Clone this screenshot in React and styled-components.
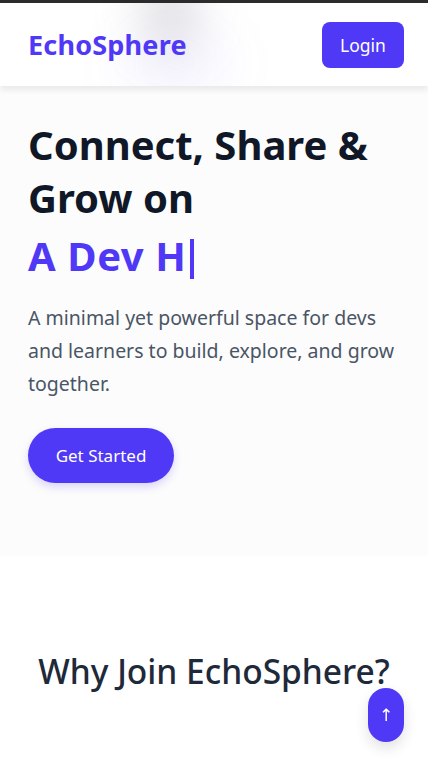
import React from "react";
import styled, { createGlobalStyle } from "styled-components";

const Global = createGlobalStyle`
  html, body { margin: 0; padding: 0; background: #ffffff; }
  body { font-family: "Noto Sans", "Open Sans", sans-serif; overflow: hidden; }
  * { box-sizing: border-box; }
`;

const Page = styled.div`
  min-height: 764px;
  border-top: 3px solid #2b2b2b;
  position: relative;
  overflow: hidden;
`;

const Header = styled.header`
  position: relative;
  z-index: 2;
  height: 83px;
  background: #ffffff;
  display: flex;
  align-items: center;
  justify-content: space-between;
  padding: 0 24px 0 28px;
  box-shadow: 0 4px 6px rgba(0, 0, 0, 0.08);
  overflow: hidden;
`;

const Blob = styled.div`
  position: absolute;
  border-radius: 50%;
  filter: blur(${(p) => p.$blur}px);
  background: ${(p) => p.$color};
  width: ${(p) => p.$w}px;
  height: ${(p) => p.$h}px;
  left: ${(p) => p.$x}px;
  top: ${(p) => p.$y}px;
  pointer-events: none;
`;

const Logo = styled.div`
  position: relative;
  font-size: 27px;
  font-weight: 700;
  color: #4f39f6;
  letter-spacing: 0.2px;
`;

const LoginButton = styled.button`
  position: relative;
  width: 82px;
  height: 46px;
  border: none;
  border-radius: 8px;
  background: #4f39f6;
  color: #ffffff;
  font-family: inherit;
  font-size: 17.5px;
`;

const Hero = styled.section`
  background: #fcfcfc;
  padding: 32px 28px 73px;
  display: flex;
  flex-direction: column;
  align-items: flex-start;
`;

const Title = styled.h1`
  margin: 0;
  font-size: 40px;
  line-height: 53px;
  font-weight: 700;
  color: #101828;
  letter-spacing: 0;
`;

const Typed = styled.div`
  margin-top: 6px;
  font-size: 40px;
  line-height: 52px;
  font-weight: 700;
  color: #4f39f6;
  letter-spacing: 0.6px;
  display: flex;
  align-items: center;
`;

const Cursor = styled.span`
  display: inline-block;
  width: 4px;
  height: 40px;
  margin-left: 4px;
  margin-top: 6px;
  background: #4f39f6;
`;

const Lead = styled.p`
  margin: 19px 0 0;
  font-size: 19.5px;
  line-height: 33px;
  color: #4a5565;
  max-width: 372px;
`;

const StartButton = styled.button`
  margin-top: 28px;
  width: 146px;
  height: 55px;
  border: none;
  border-radius: 999px;
  background: #4f39f6;
  color: #ffffff;
  font-family: inherit;
  font-size: 17px;
  box-shadow: 0 4px 8px rgba(79, 57, 246, 0.2);
`;

const Features = styled.section`
  padding: 92px 20px 40px;
  display: flex;
  justify-content: center;
`;

const SectionTitle = styled.h2`
  margin: 0;
  font-size: 33.5px;
  font-weight: 500;
  color: #1e2939;
  text-align: center;
  letter-spacing: 0;
`;

const ScrollTop = styled.button`
  position: fixed;
  right: 24px;
  bottom: 22px;
  width: 36px;
  height: 54px;
  border: none;
  border-radius: 18px;
  background: #4f39f6;
  color: #ffffff;
  font-size: 17px;
  font-family: "DejaVu Sans", sans-serif;
  display: flex;
  align-items: center;
  justify-content: center;
  box-shadow: 0 6px 14px rgba(0, 0, 0, 0.12);
`;

export default function App() {
  return (
    <Page>
      <Global />
      <Header>
        <Blob $color="rgba(160,160,160,0.28)" $w={60} $h={90} $x={140} $y={-40} $blur={22} />
        <Blob $color="rgba(120,100,255,0.06)" $w={110} $h={90} $x={120} $y={15} $blur={24} />
        <Logo>EchoSphere</Logo>
        <LoginButton>Login</LoginButton>
      </Header>
      <Hero>
        <Title>
          Connect, Share &amp;
          <br />
          Grow on
        </Title>
        <Typed>
          A Dev H<Cursor />
        </Typed>
        <Lead>
          A minimal yet powerful space for devs and learners to build, explore, and grow together.
        </Lead>
        <StartButton>Get Started</StartButton>
      </Hero>
      <Features>
        <SectionTitle>Why Join EchoSphere?</SectionTitle>
      </Features>
      <ScrollTop>↑</ScrollTop>
    </Page>
  );
}
